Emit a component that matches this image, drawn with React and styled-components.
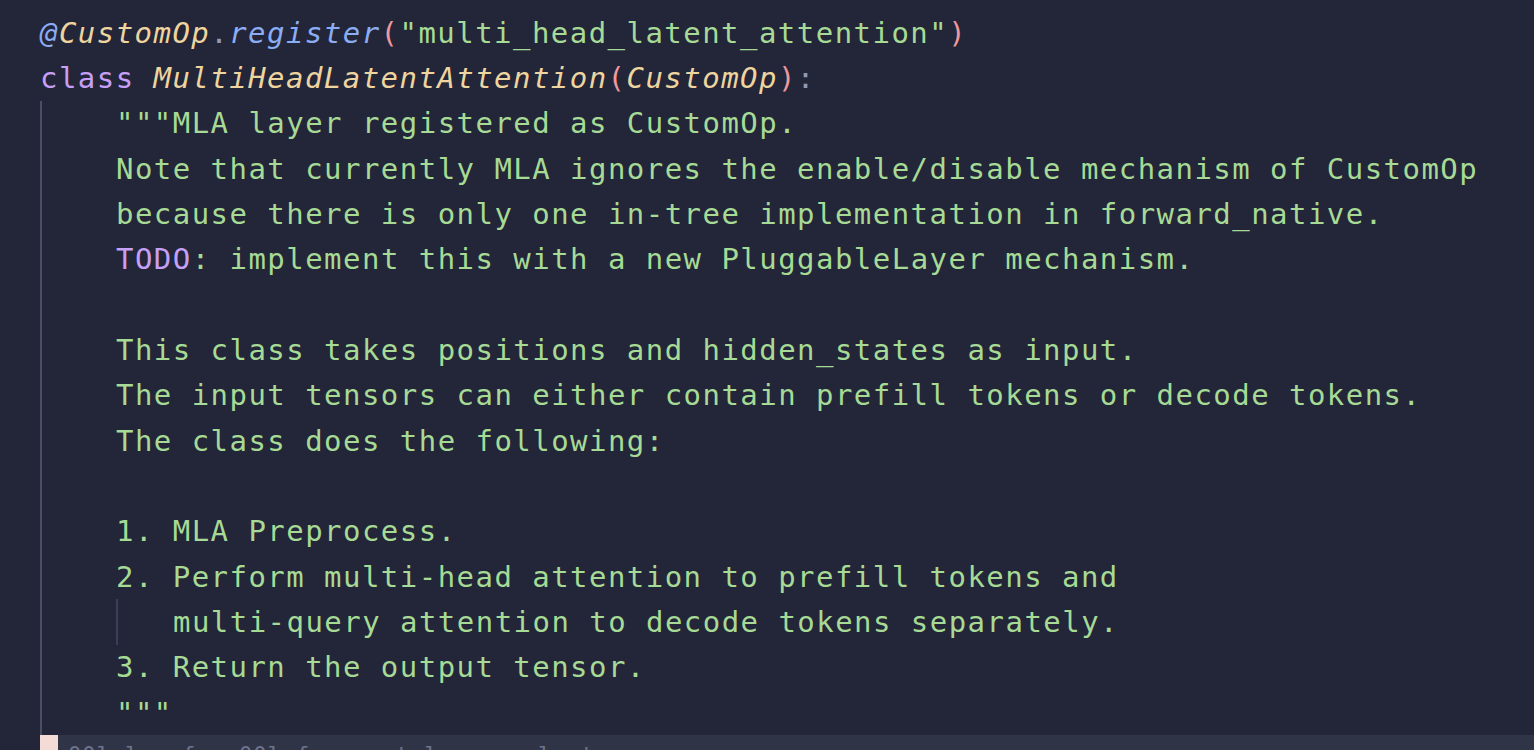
import React from "react";
import styled, { createGlobalStyle } from "styled-components";

const GlobalStyle = createGlobalStyle`
  html, body {
    margin: 0;
    padding: 0;
    background: #232539;
    overflow: hidden;
  }
`;

const colors = {
  deco: "#8aadf4",
  type: "#eed49f",
  punct: "#939ab7",
  fn: "#8aadf4",
  paren: "#ee99a0",
  str: "#a6da95",
  kw: "#c6a0f6",
  todo: "#c6a0f6",
};

const italicKinds = ["type", "fn", "deco"];

// each line: guides = widths of indent guides (px), tokens = [text, kind]
const LINES = [
  {
    guides: [],
    tokens: [
      ["@", "deco"],
      ["CustomOp", "type"],
      [".", "punct"],
      ["register", "fn"],
      ["(", "paren"],
      ['"multi_head_latent_attention"', "str"],
      [")", "paren"],
    ],
  },
  {
    guides: [],
    tokens: [
      ["class ", "kw"],
      ["MultiHeadLatentAttention", "type"],
      ["(", "paren"],
      ["CustomOp", "type"],
      [")", "paren"],
      [":", "punct"],
    ],
  },
  { guides: [76], tokens: [['"""MLA layer registered as CustomOp.', "str"]] },
  {
    guides: [76],
    tokens: [["Note that currently MLA ignores the enable/disable mechanism of CustomOp", "str"]],
  },
  {
    guides: [76],
    tokens: [["because there is only one in-tree implementation in forward_native.", "str"]],
  },
  {
    guides: [76],
    tokens: [
      ["TODO", "todo"],
      [": implement this with a new PluggableLayer mechanism.", "str"],
    ],
  },
  { guides: [76], tokens: [] },
  { guides: [76], tokens: [["This class takes positions and hidden_states as input.", "str"]] },
  {
    guides: [76],
    tokens: [["The input tensors can either contain prefill tokens or decode tokens.", "str"]],
  },
  { guides: [76], tokens: [["The class does the following:", "str"]] },
  { guides: [76], tokens: [] },
  { guides: [76], tokens: [["1. MLA Preprocess.", "str"]] },
  {
    guides: [76],
    tokens: [["2. Perform multi-head attention to prefill tokens and", "str"]],
  },
  {
    guides: [76, 57],
    tokens: [["multi-query attention to decode tokens separately.", "str"]],
    dim: true,
  },
  { guides: [76], tokens: [["3. Return the output tensor.", "str"]] },
  { guides: [76], tokens: [['"""', "str"]] },
];

const Editor = styled.div`
  padding: 10px 0 0 40px;
  font-family: "DejaVu Sans Mono", "Liberation Mono", monospace;
  font-size: 29px;
  letter-spacing: 1.46px;
  color: #a6da95;
`;

const Line = styled.div`
  display: flex;
  align-items: stretch;
  height: 45.33px;
  white-space: pre;
`;

const Guide = styled.span`
  flex: 0 0 auto;
  width: ${(p) => p.$w}px;
  box-sizing: border-box;
  border-left: 2px solid ${(p) => (p.$inner ? "#3b3e54" : "#4a4d65")};
`;

const Code = styled.span`
  display: flex;
  align-items: center;
`;

const Token = styled.span`
  color: ${(p) => colors[p.$kind]};
  font-style: ${(p) => (italicKinds.includes(p.$kind) ? "italic" : "normal")};
`;

const BlameBar = styled.div`
  display: flex;
  height: 20px;
  background: #303447;
  overflow: hidden;
`;

const Cursor = styled.span`
  flex: 0 0 18px;
  background: #f4dbd6;
`;

const BlameText = styled.span`
  padding: 9px 0 0 10px;
  font-size: 22px;
  letter-spacing: 1px;
  color: #6e738d;
  white-space: pre;
  line-height: 1;
`;

export default function App() {
  return (
    <>
      <GlobalStyle />
      <Editor>
        {LINES.map((line, i) => (
          <Line key={i}>
            {line.guides.map((w, j) => (
              <Guide key={j} $w={w} $inner={j > 0} />
            ))}
            <Code>
              {line.tokens.map(([text, kind], k) => (
                <Token key={k} $kind={kind}>
                  {text}
                </Token>
              ))}
            </Code>
          </Line>
        ))}
        <BlameBar>
          <Cursor />
          <BlameText>00l lrucfs, 00l fa x umt la • un laotv</BlameText>
        </BlameBar>
      </Editor>
    </>
  );
}
